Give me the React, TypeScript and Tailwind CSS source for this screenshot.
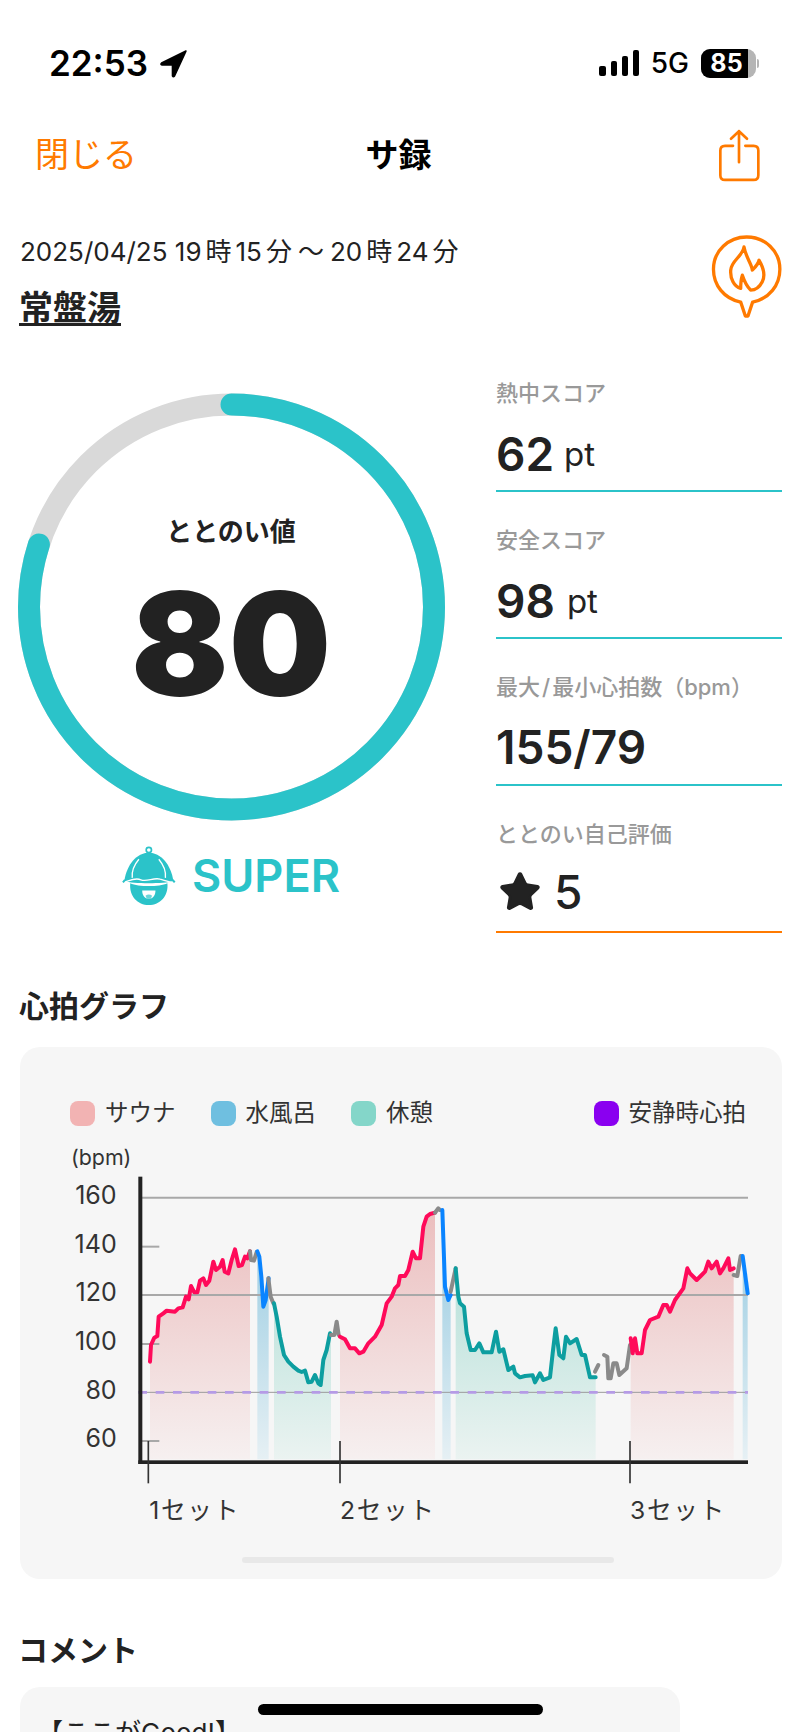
import React from 'react';
import { Star } from 'lucide-react';

const TEAL = '#2bc3c9';
const BASE = 1258;

// chart points, in units of 1/3 px
const segments = [
  { c: '#ff0a5a', f: 'sauna', p: '450,965 453,915 463,893 472,888 476,830 490,820 500,812 525,815 535,805 548,802 558,770 566,778 573,738 583,757 592,757 600,722 610,715 618,735 628,722 640,665 648,690 660,680 668,660 674,695 685,700 695,660 705,628 716,678 726,675 735,650 742,655 750,634' },
  { c: '#8a8a8a', p: '750,634 753,660 762,662 770,636' },
  { c: '#0a84ff', f: 'water', p: '772,634 778,650 784,710 790,800 797,780 806,715' },
  { c: '#8a8a8a', p: '805,715 812,770 820,790' },
  { c: '#0d9ea0', f: 'rest', p: '822,790 830,830 840,890 852,945 865,965 880,980 895,992 905,996 915,992 925,1027 935,1025 945,1005 955,1030 962,1035 970,960 980,930 990,880 993,885' },
  { c: '#8a8a8a', p: '993,885 1003,885 1010,845 1016,885' },
  { c: '#ff0a5a', f: 'sauna', p: '1020,890 1035,898 1050,925 1065,925 1078,940 1090,935 1105,910 1125,890 1145,855 1160,790 1175,770 1185,745 1195,735 1200,708 1215,708 1225,690 1238,635 1248,655 1260,655 1270,560 1280,530 1290,522 1305,518' },
  { c: '#8a8a8a', p: '1305,518 1315,505 1320,510' },
  { c: '#0a84ff', f: 'water', p: '1327,510 1335,740 1345,780 1352,765' },
  { c: '#8a8a8a', p: '1352,755 1367,685' },
  { c: '#0d9ea0', f: 'rest', p: '1367,685 1375,770 1380,790 1392,800 1400,880 1412,930 1425,930 1438,910 1450,937 1475,937 1488,875 1498,935 1510,928 1525,990 1540,980 1545,1000 1560,1012 1575,1008 1598,1006 1605,1027 1620,1000 1630,1020 1650,1012 1658,940 1667,865 1678,945 1690,955 1698,890 1710,910 1730,897 1745,945 1755,945 1770,1012 1787,1012' },
  { c: '#8a8a8a', p: '1785,995 1795,975' },
  { c: '#8a8a8a', p: '1812,945 1822,950 1825,1015 1832,1015 1840,970 1850,970 1858,1005 1880,985 1890,915' },
  { c: '#ff0a5a', f: 'sauna', p: '1892,895 1898,940 1905,895 1912,940 1925,940 1935,870 1950,840 1975,830 1990,795 2000,795 2010,815 2025,780 2050,745 2062,685 2070,700 2090,720 2105,705 2115,695 2125,665 2135,685 2150,665 2160,700 2170,685 2185,655 2190,690 2201,685' },
  { c: '#8a8a8a', p: '2201,705 2212,708 2222,648' },
  { c: '#0a84ff', f: 'water', p: '2228,648 2243,760' },
];

const area = (p: string) => {
  const pts = p.split(' ');
  return `${p} ${pts[pts.length - 1].split(',')[0]},${BASE} ${pts[0].split(',')[0]},${BASE}`;
};

function StatusBar() {
  return (
    <div className="flex h-[126px] items-center justify-between pl-[49px] pr-[41px] text-black">
      <div className="flex items-center gap-[11px]">
        <span className="text-[35px] font-semibold leading-none">22:53</span>
        <svg width="29" height="29" viewBox="0 0 28 28">
          <path d="M26 2 L2.5 13.5 Q1 15 3 15.5 L13 15.5 L13 26 Q13.8 27.5 15 26 Z" fill="#000" stroke="#000" strokeWidth="1.5" strokeLinejoin="round" />
        </svg>
      </div>
      <div className="flex items-center">
        <div className="flex items-end gap-[5px]">
          <div className="h-[10px] w-[7px] rounded-[2px] bg-black" />
          <div className="h-[15px] w-[6px] rounded-[2px] bg-black" />
          <div className="h-[20px] w-[6px] rounded-[2px] bg-black" />
          <div className="h-[26px] w-[6px] rounded-[2px] bg-black" />
        </div>
        <span className="ml-[12px] text-[28px] font-medium leading-none">5G</span>
        <div className="relative ml-[12px] h-[29px] w-[55px] overflow-hidden rounded-[9px] bg-[#b5b5b5]">
          <div className="h-full w-[85%] bg-black" />
          <span className="absolute inset-0 flex items-center justify-center pr-[4px] text-[25px] font-bold leading-none text-white">85</span>
        </div>
        <div className="ml-[1px] h-[9px] w-[2px] rounded-r-full bg-[#b5b5b5]" />
      </div>
    </div>
  );
}

function HelmetIcon() {
  return (
    <svg width="57" height="63" viewBox="60 40 170 190">
      <circle cx="146" cy="58" r="8" fill="none" stroke={TEAL} strokeWidth="5" />
      <path d="M72 152 C80 100 110 68 146 66 C182 68 212 100 220 152 C190 160 100 160 72 152 Z" fill={TEAL} />
      <path d="M116 86 C100 105 94 125 96 142 M176 86 C192 105 198 125 196 142" fill="none" stroke="#fff" strokeWidth="4" />
      <path d="M90 158 C115 170 177 170 202 158 C206 196 180 224 146 224 C112 224 86 196 90 158 Z" fill={TEAL} />
      <path d="M68 156 C90 150 105 140 122 148 C140 156 160 140 180 146 C195 150 205 156 224 156" fill="none" stroke="#fff" strokeWidth="4" />
      <path d="M68 156 L74 148 M224 156 L218 148" stroke={TEAL} strokeWidth="6" />
      <path d="M126 180 L166 180 C166 195 158 205 146 205 C134 205 126 195 126 180 Z" fill="#fff" />
      <path d="M136 196 C142 191 150 191 156 196 L152 205 L140 205 Z" fill={TEAL} opacity="0.7" />
    </svg>
  );
}

function Stat({ label, children, line, row }: { label: React.ReactNode; children: React.ReactNode; line: string; row?: string }) {
  return (
    <div className={`h-[147px] border-b-2 pt-[33px] ${line}`}>
      <p className="h-[30px] text-[22px] font-medium leading-[30px] text-[#999]">{label}</p>
      <div className={`mt-[16px] flex h-[60px] items-center text-[#222] ${row ?? ''}`}>{children}</div>
    </div>
  );
}

function Chart() {
  return (
    <svg width="700" height="390" viewBox="180 300 2100 1170">
      <defs>
        <linearGradient id="sauna" gradientUnits="userSpaceOnUse" x1="0" y1="500" x2="0" y2={BASE}>
          <stop offset="0" stopColor="#ebbdbd" />
          <stop offset="1" stopColor="#f6f0f0" />
        </linearGradient>
        <linearGradient id="water" gradientUnits="userSpaceOnUse" x1="0" y1="600" x2="0" y2={BASE}>
          <stop offset="0" stopColor="#9ccde2" />
          <stop offset="1" stopColor="#e6f0f4" />
        </linearGradient>
        <linearGradient id="rest" gradientUnits="userSpaceOnUse" x1="0" y1="700" x2="0" y2={BASE}>
          <stop offset="0" stopColor="#b8e1da" />
          <stop offset="1" stopColor="#ebf3f1" />
        </linearGradient>
      </defs>

      {segments.filter((s) => s.f).map((s, i) => (
        <polygon key={i} points={area(s.p)} fill={`url(#${s.f})`} />
      ))}

      <g stroke="#a8a8a8" strokeWidth="6">
        <line x1="420" y1="473" x2="2244" y2="473" />
        <line x1="420" y1="765" x2="2244" y2="765" />
        <line x1="420" y1="620" x2="478" y2="620" />
        <line x1="420" y1="912" x2="478" y2="912" />
        <line x1="420" y1="1203" x2="478" y2="1203" />
      </g>
      <line x1="420" y1="1057" x2="2244" y2="1057" stroke="#9a9a9a" strokeWidth="3" />
      <line x1="415" y1="1057" x2="2244" y2="1057" stroke="#b59be6" strokeWidth="8" strokeDasharray="26 26" />

      {segments.map((s, i) => (
        <polyline key={i} points={s.p} fill="none" stroke={s.c} strokeWidth="12" strokeLinejoin="round" strokeLinecap="round" />
      ))}

      <rect x="415" y="410" width="12" height="862" fill="#222" />
      <rect x="415" y="1261" width="1829" height="11" fill="#222" />
      <g stroke="#333" strokeWidth="5">
        <line x1="445" y1="1203" x2="445" y2="1330" />
        <line x1="1020" y1="1203" x2="1020" y2="1330" />
        <line x1="1890" y1="1203" x2="1890" y2="1330" />
      </g>

      <g fill="#333" fontSize="75" textAnchor="end">
        <text x="350" y="491">160</text>
        <text x="350" y="638">140</text>
        <text x="350" y="784">120</text>
        <text x="350" y="930">100</text>
        <text x="350" y="1076">80</text>
        <text x="350" y="1221">60</text>
      </g>
      <text x="213" y="375" fill="#333" fontSize="64">(bpm)</text>
      <g fill="#333" fontSize="74" letterSpacing="5">
        <text x="448" y="1436">1セット</text>
        <text x="1020" y="1436">2セット</text>
        <text x="1890" y="1436">3セット</text>
      </g>
    </svg>
  );
}

export default function App() {
  const legend = [
    { label: 'サウナ', color: 'bg-[#f2b3b3]' },
    { label: '水風呂', color: 'bg-[#6fbfe0]' },
    { label: '休憩', color: 'bg-[#84d6c9]' },
  ];

  return (
    <div className="relative h-[1732px] w-[800px] overflow-hidden bg-white [font-family:Inter,'Noto_Sans_CJK_JP',sans-serif]">
      <StatusBar />

      {/* nav */}
      <div className="grid h-[58px] grid-cols-[1fr_auto_1fr] items-center pl-[35px] pr-[38px]">
        <span className="text-[34px] leading-none text-[#ff7a00]">閉じる</span>
        <span className="text-[33px] font-bold leading-none text-black">サ録</span>
        <div className="flex justify-end">
          <svg width="45" height="57" viewBox="80 50 135 170" fill="none" stroke="#ff7a00" strokeWidth="8" strokeLinecap="round" strokeLinejoin="round">
            <path d="M146 155 L146 62 M122 85 L146 62 L170 85" />
            <path d="M128 106 L104 106 Q90 106 90 120 L90 194 Q90 208 104 208 L190 208 Q204 208 204 194 L204 120 Q204 106 190 106 L165 106" />
          </svg>
        </div>
      </div>

      <div className="pl-[20px] pr-[18px] pt-[48px]">
        {/* date + place */}
        <div className="flex h-[99px] justify-between">
          <div>
            <p className="h-[40px] text-[26px] leading-[40px] text-[#222]">
              2025/04/25 19<span className="mx-[4px]">時</span>15<span className="mx-[4px]">分</span>
              <span className="ml-[2px] mr-[6px]">〜</span>20<span className="mx-[4px]">時</span>24<span className="mx-[4px]">分</span>
            </p>
            <p className="-ml-px mt-[14px] text-[34px] font-semibold leading-[44px] text-[#222] underline underline-offset-[3px]">常盤湯</p>
          </div>
          <svg className="-mr-[2px]" width="75" height="88" viewBox="55 365 225 265" fill="none" stroke="#ff7a00" strokeWidth="10" strokeLinecap="round" strokeLinejoin="round">
            <path d="M150 576 C100 566 68 525 68 477 C68 422 113 380 168 380 C223 380 268 422 268 477 C268 525 236 566 186 576 L172 618 L164 618 Z" />
            <path d="M160 410 C165 440 185 465 185 480 C195 470 205 455 205 450 C220 475 225 495 215 515 C205 535 190 540 180 540 C170 530 160 510 155 495 C150 510 150 525 150 535 C130 530 118 505 120 480 C122 450 155 440 160 410 Z" />
          </svg>
        </div>

        {/* score */}
        <div className="mt-[14px] flex justify-between">
          <div className="w-[428px] pt-[48px]">
            <div className="relative h-[428px] w-[428px]">
              <svg className="overflow-visible" width="428" height="428" viewBox="0 0 428 428" fill="none" strokeWidth="22">
                <circle cx="211.5" cy="214" r="202.5" stroke="#d9d9d9" />
                <circle cx="211.5" cy="214" r="202.5" stroke={TEAL} strokeLinecap="round" pathLength="100" strokeDasharray="80 100" transform="rotate(-90 211.5 214)" />
              </svg>
              <div className="absolute inset-0 flex w-[422px] flex-col items-center">
                <p className="mt-[122px] text-[26px] font-semibold leading-[34px] text-[#222]">ととのい値</p>
                <p className="mt-[20px] text-[144px] font-black leading-[150px] text-[#222]">80</p>
              </div>
            </div>
            <div className="mt-[23px] flex h-[63px] w-[420px] items-center justify-center gap-[15px]">
              <HelmetIcon />
              <span className="text-[45px] font-semibold leading-none text-[#2bc3c9]">SUPER</span>
            </div>
          </div>

          <div className="w-[286px]">
            <Stat label="熱中スコア" line="border-[#2bc3c9]">
              <span className="text-[46px] font-semibold leading-none">62</span>
              <span className="ml-[10px] text-[33px] leading-none">pt</span>
            </Stat>
            <Stat label="安全スコア" line="border-[#2bc3c9]">
              <span className="text-[46px] font-semibold leading-none">98</span>
              <span className="ml-[12px] text-[33px] leading-none">pt</span>
            </Stat>
            <Stat label={<>最大<span className="mx-[2px]">/</span>最小心拍数（bpm）</>} line="border-[#2bc3c9]">
              <span className="-mt-[2px] text-[46px] font-semibold leading-none">155/79</span>
            </Stat>
            <Stat label="ととのい自己評価" line="border-[#ff7a00]" row="pb-[6px]">
              <Star className="ml-[2px]" size={44} fill="#222" stroke="#222" strokeWidth={1.5} />
              <span className="ml-[12px] text-[46px] font-medium leading-none">5</span>
            </Stat>
          </div>
        </div>

        {/* heart rate graph */}
        <h2 className="-ml-px mt-[53px] h-[40px] text-[30px] font-bold leading-[40px] text-[#222]">心拍グラフ</h2>
        <div className="mt-[21px] rounded-[20px] bg-[#f6f6f6] pb-[16px] pl-[40px] pr-[22px] pt-[51px]">
          <div className="flex h-[30px] items-center pl-[10px] pr-[14px] text-[23.5px] text-[#333]">
            {legend.map((l) => (
              <div key={l.label} className="mr-[35px] flex items-center gap-[10px]">
                <div className={`h-[25px] w-[25px] rounded-[8px] ${l.color}`} />
                <span className="leading-none">{l.label}</span>
              </div>
            ))}
            <div className="ml-auto flex items-center gap-[10px]">
              <div className="h-[25px] w-[25px] rounded-[8px] bg-[#8a00f0]" />
              <span className="leading-none">安静時心拍</span>
            </div>
          </div>
          <div className="mt-[12px]">
            <Chart />
          </div>
          <div className="ml-[182px] mt-[27px] h-[6px] w-[372px] rounded-full bg-[#e8e8e8]" />
        </div>

        {/* comment */}
        <h2 className="-ml-[2px] mt-[51px] h-[40px] text-[30px] font-bold leading-[40px] text-[#222]">コメント</h2>
        <div className="mt-[17px] w-[660px] rounded-[20px] bg-[#f6f6f6] px-[17px] pt-[28px]">
          <p className="text-[26px] leading-[36px] text-[#222]">【ここがGood!】</p>
        </div>
      </div>

      {/* home indicator */}
      <div className="absolute left-[258px] top-[1704px] h-[11px] w-[285px] rounded-full bg-black" />
    </div>
  );
}
